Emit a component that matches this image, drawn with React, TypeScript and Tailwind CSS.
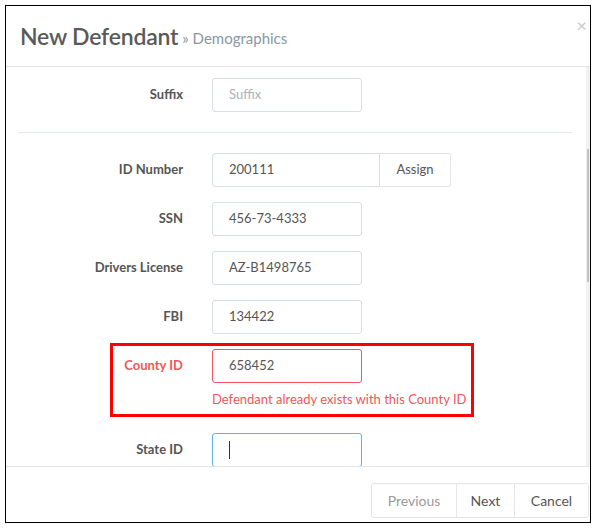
import React from "react";

const fieldRows = [
  { label: "SSN", value: "456-73-4333" },
  { label: "Drivers License", value: "AZ-B1498765" },
  { label: "FBI", value: "134422" },
];

function Row({ label, children, labelClass = "text-[#555]" }: { label: string; children: React.ReactNode; labelClass?: string }) {
  return (
    <div className="flex items-center">
      <div className={`w-[177px] text-right text-[13px] font-bold ${labelClass}`}>{label}</div>
      <div className="ml-[29px]">{children}</div>
    </div>
  );
}

function TextInput({ value, placeholder }: { value?: string; placeholder?: string }) {
  return (
    <div className="w-[150px] h-[34px] border border-[#d9dee2] rounded-[3px] px-[16px] flex items-center text-[13px]">
      {value ? <span className="text-[#555]">{value}</span> : <span className="text-[#aab2ba]">{placeholder}</span>}
    </div>
  );
}

export default function App() {
  return (
    <div className="w-[596px] h-[528px] bg-white p-[5px]" style={{ fontFamily: "Lato, 'Liberation Sans', sans-serif" }}>
      <div className="h-full border border-black flex flex-col overflow-hidden">
        {/* Header */}
        <div className="h-[61px] shrink-0 border-b border-[#e5e5e5] flex items-center pl-[14px] pr-[4px] relative">
          <span className="text-[23px] font-semibold text-[#5a5a5a] tracking-[-0.2px]">New Defendant</span>
          <span className="ml-[4px] mt-[4px] text-[15px] text-[#8b97a1]">» Demographics</span>
          <span className="absolute right-[3px] top-[10px] text-[18px] text-[#c8c8c8] leading-none">×</span>
        </div>

        {/* Body */}
        <div className="h-[399px] shrink-0 flex overflow-hidden">
          <div className="flex-1 pt-[11px]">
            <Row label="Suffix">
              <TextInput placeholder="Suffix" />
            </Row>
            <div className="ml-[12px] mr-[14px] mt-[20px] mb-[20px] border-t border-[#e3e9ed]" />
            <div className="flex flex-col gap-[15px]">
              <Row label="ID Number">
                <div className="flex">
                  <div className="w-[168px] h-[34px] border border-[#d9dee2] rounded-l-[3px] px-[16px] flex items-center text-[13px] text-[#555]">200111</div>
                  <div className="w-[71px] h-[34px] border border-l-0 border-[#e3e7ea] rounded-r-[3px] flex items-center justify-center text-[13px] text-[#555]">Assign</div>
                </div>
              </Row>
              {fieldRows.map((r) => (
                <Row key={r.label} label={r.label}>
                  <TextInput value={r.value} />
                </Row>
              ))}
              <div className="relative">
                <Row label="County ID" labelClass="text-[#f0565b]">
                  <div className="w-[150px] h-[34px] border border-[#f0565b] rounded-[3px] px-[16px] flex items-center text-[13px] text-[#555]">658452</div>
                </Row>
                <div className="ml-[206px] mt-[7px] text-[13px] text-[#f0565b] whitespace-nowrap">Defendant already exists with this County ID</div>
                <div className="absolute left-[104px] top-[-6px] w-[364px] h-[74px] border-[3px] border-[#ff0000]" />
              </div>
              <div className="mt-[8px]">
                <Row label="State ID">
                  <div className="w-[150px] h-[34px] border border-[#66afe9] rounded-[3px] px-[16px] flex items-center">
                    <div className="w-px h-[18px] bg-[#333]" />
                  </div>
                </Row>
              </div>
            </div>
          </div>
          {/* scrollbar */}
          <div className="w-[4px] bg-[#f1f1f1] flex flex-col">
            <div className="h-[82px]" />
            <div className="mx-auto w-[2px] h-[133px] bg-[#c1c1c1]" />
          </div>
        </div>

        {/* Footer */}
        <div className="flex-1 border-t border-[#e5e5e5] flex justify-end items-start pt-[16px] pr-[1px]">
          <div className="flex h-[35px] border border-[#e6e6e6] rounded-[3px] text-[14px]">
            <div className="w-[84px] flex items-center justify-center text-[#9a9a9a]">Previous</div>
            <div className="w-[58px] flex items-center justify-center text-[#555] border-l border-[#e6e6e6]">Next</div>
            <div className="w-[74px] flex items-center justify-center text-[#555] border-l border-[#e6e6e6]">Cancel</div>
          </div>
        </div>
      </div>
    </div>
  );
}
